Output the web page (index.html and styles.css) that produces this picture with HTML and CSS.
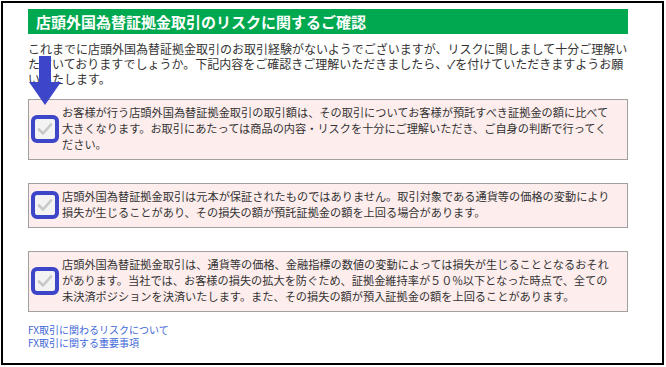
FILE: index.html
```html
<!DOCTYPE html>
<html lang="ja">
<head>
    <meta charset="UTF-8">
    <meta name="viewport" content="width=device-width, initial-scale=1.0">
    <title>店頭外国為替証拠金取引のリスクに関するご確認</title>
    <link rel="stylesheet" href="styles.css">
</head>
<body>
    <div class="frame">
        <h1 class="title">店頭外国為替証拠金取引のリスクに関するご確認</h1>

        <p class="intro">これまでに店頭外国為替証拠金取引のお取引経験がないようでございますが、リスクに関しまして十分ご理解いただいておりますでしょうか。下記内容をご確認きご理解いただきましたら、✓を付けていただきますようお願<span class="nobr">いいたします。</span></p>

        <div class="risk-box">
            <span class="check"><svg viewBox="0 0 20 20" width="20" height="20"><path d="M4 10.5 L8 14.5 L16 5.5" fill="none" stroke="#c8c8c8" stroke-width="2.6" stroke-linecap="round" stroke-linejoin="round"/></svg></span>
            <p>お客様が行う店頭外国為替証拠金取引の取引額は、その取引についてお客様が預託すべき証拠金の額に比べて大きくなります。お取引にあたっては商品の内容・リスクを十分にご理解いただき、ご自身の判断で行ってください。</p>
        </div>

        <div class="risk-box">
            <span class="check"><svg viewBox="0 0 20 20" width="20" height="20"><path d="M4 10.5 L8 14.5 L16 5.5" fill="none" stroke="#c8c8c8" stroke-width="2.6" stroke-linecap="round" stroke-linejoin="round"/></svg></span>
            <p>店頭外国為替証拠金取引は元本が保証されたものではありません。取引対象である通貨等の価格の変動により損失が生じることがあり、その損失の額が預託証拠金の額を上回る場合があります。</p>
        </div>

        <div class="risk-box">
            <span class="check"><svg viewBox="0 0 20 20" width="20" height="20"><path d="M4 10.5 L8 14.5 L16 5.5" fill="none" stroke="#c8c8c8" stroke-width="2.6" stroke-linecap="round" stroke-linejoin="round"/></svg></span>
            <p>店頭外国為替証拠金取引は、通貨等の価格、金融指標の数値の変動によっては損失が生じることとなるおそれがあります。当社では、お客様の損失の拡大を防ぐため、証拠金維持率が５０%以下となった時点で、全ての未決済ポジションを決済いたします。また、その損失の額が預入証拠金の額を上回ることがあります。</p>
        </div>

        <div class="links">
            <a href="#">FX取引に関わるリスクについて</a>
            <a href="#">FX取引に関する重要事項</a>
        </div>

        <svg class="pointer" viewBox="0 0 32 50" width="32" height="50">
            <polygon points="10,0 22,0 22,26 32,26 16,49 0,26 10,26" fill="#3d46c9"/>
        </svg>
    </div>
</body>
</html>
```

FILE: styles.css
```css
body {
    margin: 0;
    font-family: "Noto Sans CJK JP", "Noto Sans", sans-serif;
    color: #333;
    background: #fff;
}

.frame {
    position: relative;
    margin: 1px;
    width: 663px;
    height: 364px;
    box-sizing: border-box;
    border: 2px solid #000;
    padding: 6px 0 0 25px;
}

.title {
    width: 600px;
    height: 25px;
    margin: 0;
    padding-left: 8px;
    box-sizing: border-box;
    background-color: #00a84f;
    color: #fff;
    font-size: 15px;
    font-weight: bold;
    line-height: 25px;
}

.intro {
    width: 600px;
    margin: 8px 0 0 0;
    font-size: 12px;
    line-height: 14.8px;
}

.nobr {
    white-space: nowrap;
}

.risk-box {
    display: flex;
    align-items: center;
    gap: 3px;
    width: 600px;
    box-sizing: border-box;
    margin-top: 23px;
    padding: 5px 10px 7px 2px;
    background-color: #fdeded;
    border: 1px solid #a0a0a0;
}

.intro + .risk-box {
    margin-top: 13px;
}

.risk-box p {
    margin: 0;
    font-size: 11.2px;
    line-height: 15.6px;
}

.check {
    flex: none;
    display: flex;
    justify-content: center;
    align-items: center;
    width: 28px;
    height: 28px;
    box-sizing: border-box;
    border: 4px solid #3d46c9;
    border-radius: 6px;
    background-color: #f3f3f3;
}

.links {
    display: flex;
    flex-direction: column;
    margin-top: 12px;
    font-size: 10px;
    line-height: 12.8px;
}

.links a {
    color: #3f68d8;
    text-decoration: none;
}

.pointer {
    position: absolute;
    left: 26px;
    top: 53px;
}
```
